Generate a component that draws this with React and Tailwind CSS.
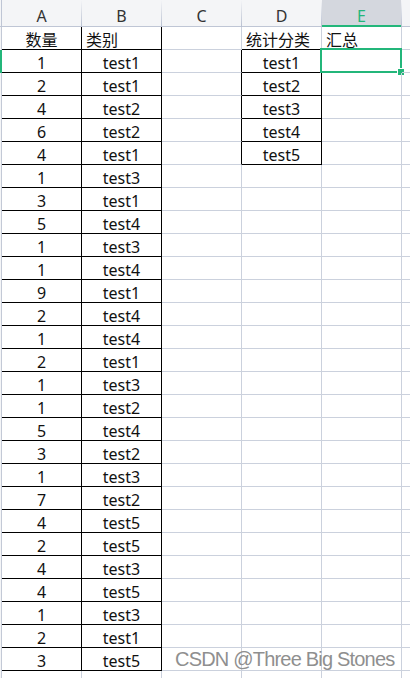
import clsx from 'clsx'

const nums = [1, 2, 4, 6, 4, 1, 3, 5, 1, 1, 9, 2, 1, 2, 1, 1, 5, 3, 1, 7, 4, 2, 4, 4, 1, 2, 3]
const cats = [
  'test1', 'test1', 'test2', 'test2', 'test1', 'test3', 'test1', 'test4', 'test3',
  'test4', 'test1', 'test4', 'test4', 'test1', 'test3', 'test2', 'test4', 'test2',
  'test3', 'test2', 'test5', 'test5', 'test3', 'test5', 'test3', 'test1', 'test5',
]
const summary = ['test1', 'test2', 'test3', 'test4', 'test5']
const letters = ['A', 'B', 'C', 'D', 'E', '']

const Cell = ({ right, bottom, left, children }) => (
  <div
    className={clsx(
      'relative w-[80px] shrink-0 h-full border-r border-b flex pt-[4px] leading-[18px] whitespace-nowrap',
      right ? 'border-r-black' : 'border-r-[#cbd1dd]',
      bottom ? 'border-b-black' : 'border-b-[#cbd1dd]',
      left ? 'justify-start pl-[4px]' : 'justify-center'
    )}
  >
    {children}
  </div>
)

const HeaderCell = ({ letter }) => {
  const active = letter === 'E'
  return (
    <div className="flex shrink-0 h-full">
      <div
        className={clsx(
          'w-[79px] h-full flex justify-center pt-[7px] leading-[18px]',
          active
            ? 'bg-[#d4d7de] border-b-2 border-[#23b67a] text-[#23b67a]'
            : 'bg-[#f4f5f7] border-b border-[#bfc6d5] text-[#333]'
        )}
      >
        {letter}
      </div>
      <div className="w-px h-full bg-[linear-gradient(to_bottom,#f4f5f7,#b7bfd0)]" />
    </div>
  )
}

const App = () => {
  const rows = Array.from({ length: 29 }, (_, i) => i + 1)

  return (
    <div
      className="relative w-[410px] h-[678px] overflow-hidden bg-white text-[16px] text-[#111]"
      style={{ fontFamily: '"Noto Sans", "Noto Sans CJK SC", sans-serif' }}
    >
      {/* Column headers */}
      <div className="flex h-[27px]">
        <div className="w-[2px] shrink-0 h-full bg-[#f4f5f7] border-r border-b border-[#bfc6d5]" />
        {letters.map((l, i) => <HeaderCell key={i} letter={l} />)}
      </div>

      {/* Rows */}
      {rows.map(r => {
        const inData = r <= 28
        const inSummary = r >= 2 && r <= 6
        return (
          <div key={r} className="flex h-[23px]">
            <div
              className={clsx(
                'w-[2px] shrink-0 h-full',
                r === 2 ? 'bg-[#23b67a]' : 'bg-[#f4f5f7] border-r border-[#c3c9d6]'
              )}
            />
            <Cell right={inData} bottom={inData}>
              {r === 1 ? '数量' : inData ? nums[r - 2] : ''}
            </Cell>
            <Cell right={inData} bottom={inData} left={r === 1}>
              {r === 1 ? '类别' : inData ? cats[r - 2] : ''}
            </Cell>
            <Cell right={inSummary} />
            <Cell right={inSummary} bottom={r === 1 || inSummary} left={r === 1}>
              {r === 1 ? '统计分类' : inSummary ? summary[r - 2] : ''}
            </Cell>
            <Cell left>
              {r === 1 && '汇总'}
              {r === 2 && (
                <>
                  <div className="absolute -left-[2px] -top-[2px] w-[82px] h-[25px] border-2 border-[#23b67a]" />
                  <div className="absolute left-[76px] top-[19px] w-[6px] h-[6px] bg-[#23b67a] outline outline-1 outline-white" />
                </>
              )}
            </Cell>
            <Cell />
          </div>
        )
      })}

      {/* Watermark */}
      <div
        className="absolute left-[175px] top-[649px] text-[20px] leading-[20px] tracking-[-0.8px] text-[#8f8f8f] whitespace-nowrap"
        style={{ fontFamily: '"Liberation Sans", Arial, sans-serif' }}
      >
        CSDN @Three Big Stones
      </div>
    </div>
  )
}

export default App
